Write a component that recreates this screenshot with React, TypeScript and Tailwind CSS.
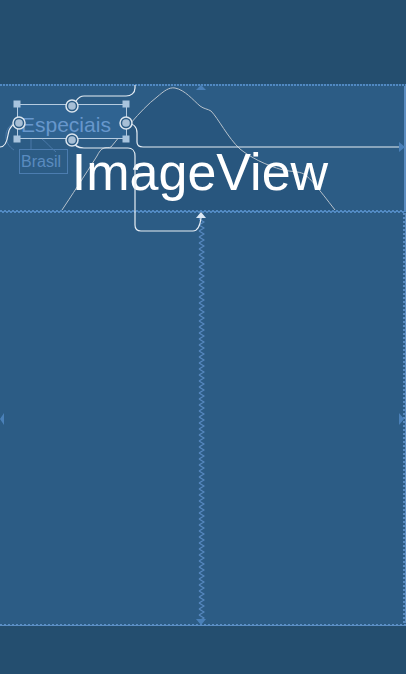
import React from "react";

// blueprint canvas: page coords, drawn over the flow layout
function Mountain() {
  return (
    <svg
      className="pointer-events-none absolute left-0 top-0"
      width={406}
      height={674}
      viewBox="0 0 406 674"
    >
      <path
        d="M62,210 C70,198 85,175 97,156 C99,152 101,149 104,148 C107,147 109,148 111,147 C121,135 140,110 157,97 C164,91 169,87 175,88 C185,90 193,100 200,106 C204,109 208,109 211,111 C218,118 228,138 240,149 C250,157 265,165 283,170 C292,172 298,171 304,174 C311,179 318,188 335,210 Z"
        fill="#28567e"
      />
      <path
        d="M62,210 C70,198 85,175 97,156 C99,152 101,149 104,148 C107,147 109,148 111,147 C121,135 140,110 157,97 C164,91 169,87 175,88 C185,90 193,100 200,106 C204,109 208,109 211,111 C218,118 228,138 240,149 C250,157 265,165 283,170 C292,172 298,171 304,174 C311,179 318,188 335,210"
        fill="none"
        stroke="#b7c2cc"
        strokeWidth={1}
      />
    </svg>
  );
}

function Anchor({ x, y }: { x: number; y: number }) {
  return (
    <g>
      <circle cx={x} cy={y} r={6} fill="#2c5c85" stroke="#dbe5ee" strokeWidth={1.5} />
      <circle cx={x} cy={y} r={3.8} fill="#a7bfd6" />
    </g>
  );
}

function Overlay() {
  const corners = [
    [17, 104],
    [126, 104],
    [17, 139],
    [126, 139],
  ];
  return (
    <svg
      className="pointer-events-none absolute left-0 top-0"
      width={406}
      height={674}
      viewBox="0 0 406 674"
    >
      {/* faint constraint loops */}
      <g fill="none" stroke="#4a79a9" strokeWidth={1}>
        <path d="M12,124 C4,130 3,143 14,150" />
        <path d="M31,139 L31,149" />
        <path d="M42,139 C46,142 50,147 56,152" />
      </g>

      {/* connectors */}
      <g fill="none" stroke="#e6edf4" strokeWidth={1.2}>
        <path d="M76,101 C78,98 80,96 84,96 L126,96 C131,96 135,93 135,88 L135,85" />
        <path d="M126,123 C133,123 137,127 137,133 L137,142 C137,145 139,147 143,147 L399,147" />
        <path d="M72,140 C74,146 78,148 84,148 L128,148 C132,148 135,151 135,156 L135,225 C135,229 137,231 141,231 L193,231 C198,231 200,226 201,218" />
        <path d="M19,123 C12,123 9,128 8,135 C7,142 4,147 0,147" />
      </g>

      {corners.map(([x, y]) => (
        <rect key={`${x}-${y}`} x={x - 3.5} y={y - 3.5} width={7} height={7} fill="#a8c4de" />
      ))}
      <Anchor x={72} y={106} />
      <Anchor x={72} y={140} />
      <Anchor x={19} y={123} />
      <Anchor x={126} y={123} />

      {/* arrows */}
      <polygon points="196,90 206,90 201,85" fill="#4a80b8" />
      <polygon points="399,142 399,152 405,147" fill="#4a80b8" />
      <polygon points="196,218 206,218 201,212" fill="#dce8f4" />
      <polygon points="196,619 206,619 201,625" fill="#4a80b8" />
      <polygon points="4,413 4,425 0,419" fill="#4a80b8" />
      <polygon points="399,413 399,425 404,419" fill="#4a80b8" />
    </svg>
  );
}

export default function App() {
  return (
    <div className="relative flex h-[674px] w-[406px] flex-col overflow-hidden bg-[#2c5c85] font-['Liberation_Sans',Arial,sans-serif]">
      <Mountain />

      <div className="h-[84px] shrink-0 bg-[#244e6f]" />
      <div className="h-[2px] shrink-0 bg-[image:repeating-linear-gradient(90deg,#5189c2_0_2px,transparent_2px_3px)]" />

      <section className="relative h-[124px] shrink-0 border-r-2 border-[#5a8cc0]">
        <div className="absolute left-[17px] top-[18px] h-[35px] w-[110px] border border-[#b5cbe0] bg-[#2f6391] pl-[3px] pt-[9px] text-[21px] leading-[21px] text-[#6797cc]">
          Especiais
        </div>
        <div className="absolute left-[19px] top-[63px] h-[25px] w-[49px] border border-[#4c7db0] pl-[1px] pt-[4px] text-[16px] leading-[16px] text-[#5a8bbf]">
          Brasil
        </div>
        <p className="relative pr-[4px] pt-[60px] text-center text-[52px] leading-[52px] text-white">
          ImageView
        </p>
      </section>

      <div className="flex h-[3px] shrink-0 flex-col">
        <div className="h-px bg-[image:repeating-linear-gradient(90deg,#5189c2_0_2px,transparent_2px_4px)]" />
        <div className="h-px bg-[#5189c2]" />
        <div className="h-px bg-[image:repeating-linear-gradient(90deg,transparent_0_2px,#5189c2_2px_4px)]" />
      </div>

      <div className="flex h-[410px] shrink-0">
        <div className="w-[198px]" />
        <svg className="block shrink-0" width={7} height={410} viewBox="0 0 7 410">
          <defs>
            <pattern id="zz" width="7" height="6" patternUnits="userSpaceOnUse">
              <path d="M1,0 L6,3 L1,6" fill="none" stroke="#5688c0" strokeWidth={1.2} />
            </pattern>
          </defs>
          <rect x={0} y={4} width={7} height={402} fill="url(#zz)" />
        </svg>
        <div className="flex-1" />
        <div className="w-[3px] border-r border-[#5a8cc0] bg-[image:repeating-linear-gradient(180deg,#5a8cc0_0_2px,transparent_2px_4px)]" />
      </div>

      <div className="flex h-[3px] shrink-0 flex-col">
        <div className="h-px" />
        <div className="h-px bg-[image:repeating-linear-gradient(90deg,#5a8ec4_0_2px,transparent_2px_4px)]" />
        <div className="h-px bg-[#5a8ec4]" />
      </div>
      <div className="flex-1 bg-[#244e6f]" />

      <Overlay />
    </div>
  );
}
